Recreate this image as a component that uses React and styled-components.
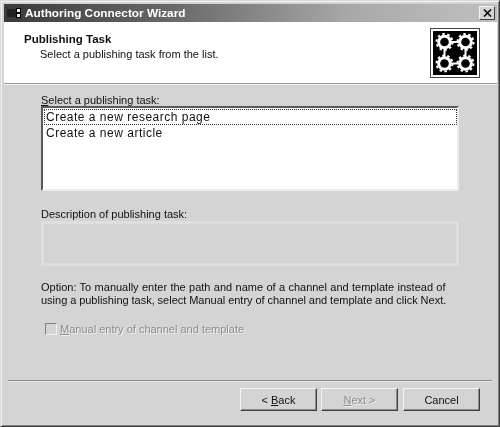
import React from "react";
import styled, { createGlobalStyle } from "styled-components";

const GlobalStyle = createGlobalStyle`
  html, body { margin: 0; padding: 0; background: #d4d4d4; }
  body { font-family: "Liberation Sans", Arial, sans-serif; font-size: 11px; color: #111; }
`;

const Win = styled.div`
  width: 500px;
  height: 427px;
  box-sizing: border-box;
  background: #d4d4d4;
  border-top: 1px solid #d8d8d8;
  border-left: 1px solid #d8d8d8;
  border-right: 1px solid #3a3a3a;
  border-bottom: 1px solid #3a3a3a;
  padding: 3px 2px 2px 3px;
  display: flex;
  flex-direction: column;
  box-shadow: inset 1px 1px 0 #f4f4f4, inset -1px -1px 0 #808080;
  filter: blur(0.4px);
`;

const TitleBar = styled.div`
  height: 18px;
  flex: none;
  display: flex;
  align-items: center;
  padding: 0 2px;
  background: linear-gradient(90deg, #3a3a3a 0%, #6a6a6a 35%, #a8a8a8 70%, #c0c0c0 100%);
`;

const TitleText = styled.span`
  color: #fff;
  font-weight: bold;
  font-size: 11.8px;
  margin-left: 3px;
  flex: 1;
`;

const CloseBtn = styled.div`
  width: 16px;
  height: 14px;
  box-sizing: border-box;
  background: #d4d4d4;
  border: 1px solid;
  border-color: #f4f4f4 #404040 #404040 #f4f4f4;
  display: flex;
  align-items: center;
  justify-content: center;
`;

const Header = styled.div`
  height: 62px;
  flex: none;
  box-sizing: border-box;
  background: #fff;
  border-bottom: 1px solid #9a9a9a;
  box-shadow: 0 1px 0 #f2f2f2;
  display: flex;
  justify-content: space-between;
  padding: 6px 17px 0 20px;
`;

const HeaderText = styled.div`
  padding-top: 2px;
`;

const HeaderTitle = styled.div`
  font-weight: bold;
  font-size: 11.5px;
  line-height: 14px;
  margin-top: 2px;
`;

const HeaderSub = styled.div`
  font-size: 11px;
  line-height: 14px;
  margin-left: 16px;
  margin-top: 1px;
`;

const Logo = styled.div`
  width: 50px;
  height: 50px;
  box-sizing: border-box;
  border: 1px solid #444;
  padding: 2px;
  background: #fff;
  svg { display: block; }
`;

const Body = styled.div`
  flex: 1;
  display: flex;
  flex-direction: column;
  padding: 8px 38px 0 37px;
`;

const Label = styled.div`
  line-height: 13px;
  height: ${(p) => p.$h || 13}px;
  margin-top: ${(p) => p.$top || 0}px;
  u { text-underline-offset: 1px; }
`;

const ListBox = styled.div`
  height: 85px;
  box-sizing: border-box;
  background: #fff;
  border: 2px solid;
  border-color: #5a5a5a #ececec #ececec #5a5a5a;
  padding: 1px 0 0 1px;
`;

const ListItem = styled.div`
  font-size: 12px;
  height: 16px;
  line-height: 14px;
  box-sizing: border-box;
  padding-left: 1px;
  letter-spacing: 0.5px;
  border: 1px ${(p) => (p.$focus ? "dotted #333" : "solid transparent")};
`;

const DescBox = styled.div`
  height: 45px;
  box-sizing: border-box;
  border: 3px solid #dedede;
  background: #d4d4d4;
`;

const Option = styled.div`
  margin-top: 15px;
  font-size: 11px;
  line-height: 13px;
  white-space: nowrap;
`;

const OptionLine = styled.span`
  display: block;
  word-spacing: ${(p) => p.$space || 0}px;
`;

const CheckRow = styled.div`
  display: flex;
  align-items: center;
  margin-top: 16px;
  margin-left: 4px;
  color: #8c8c8c;
  text-shadow: 1px 1px 0 #f0f0f0;
`;

const Box = styled.div`
  width: 12px;
  height: 12px;
  box-sizing: border-box;
  border: 1px solid;
  border-color: #808080 #f0f0f0 #f0f0f0 #808080;
  margin-right: 3px;
`;

const Divider = styled.div`
  flex: none;
  margin: 0 5px 0 4px;
  height: 1px;
  background: #8a8a8a;
  box-shadow: 0 1px 0 #e8e8e8;
`;

const Footer = styled.div`
  flex: none;
  display: flex;
  justify-content: flex-end;
  padding: 7px 17px 13px 0;
`;

const Btn = styled.div`
  width: 77px;
  height: 23px;
  box-sizing: border-box;
  margin-left: ${(p) => p.$gap || 0}px;
  border: 1px solid;
  border-color: #f4f4f4 #404040 #404040 #f4f4f4;
  box-shadow: inset -1px -1px 0 #8c8c8c;
  display: flex;
  align-items: center;
  justify-content: center;
  color: ${(p) => (p.$off ? "#8c8c8c" : "#111")};
  text-shadow: ${(p) => (p.$off ? "1px 1px 0 #f0f0f0" : "none")};
`;

// one gear: white disc with a black hole, teeth drawn as a dashed ring
const Gear = ({ x, y }) => (
  <g>
    <circle cx={x} cy={y} r="8" fill="none" stroke="#fff" strokeWidth="2" strokeDasharray="2.5 2.53" />
    <circle cx={x} cy={y} r="7.3" fill="#fff" />
    <circle cx={x} cy={y} r="4.3" fill="#000" />
  </g>
);

const GearsIcon = () => (
  <svg width="44" height="44" viewBox="0 0 44 44">
    <rect width="44" height="44" fill="#000" />
    <path d="M16 11H28M16 32.5H28M11.5 16V28M32.5 16V28" stroke="#fff" strokeWidth="2" />
    <Gear x={11.5} y={11} />
    <Gear x={32.5} y={11} />
    <Gear x={11.5} y={32.5} />
    <Gear x={32.5} y={32.5} />
  </svg>
);

const AppIcon = () => (
  <svg width="16" height="14" viewBox="0 0 16 14">
    <rect x="1" y="3" width="9" height="8" fill="#222" />
    <rect x="10" y="2" width="5" height="10" fill="#000" />
    <rect x="11" y="3" width="3" height="3" fill="#eee" />
    <rect x="11" y="8" width="3" height="3" fill="#eee" />
  </svg>
);

export default function App() {
  return (
    <>
      <GlobalStyle />
      <Win>
        <TitleBar>
          <AppIcon />
          <TitleText>Authoring Connector Wizard</TitleText>
          <CloseBtn>
            <svg width="9" height="8" viewBox="0 0 9 8">
              <path d="M1 0.5L8 7.5M8 0.5L1 7.5" stroke="#111" strokeWidth="1.7" />
            </svg>
          </CloseBtn>
        </TitleBar>
        <Header>
          <HeaderText>
            <HeaderTitle>Publishing Task</HeaderTitle>
            <HeaderSub>Select a publishing task from the list.</HeaderSub>
          </HeaderText>
          <Logo>
            <GearsIcon />
          </Logo>
        </Header>
        <Body>
          <Label $top={2} $h={12}>
            <u>S</u>elect a publishing task:
          </Label>
          <ListBox>
            <ListItem $focus>Create a new research page</ListItem>
            <ListItem>Create a new article</ListItem>
          </ListBox>
          <Label $top={17}>Description of publishing task:</Label>
          <DescBox />
          <Option>
            <OptionLine $space={0.3}>
              Option: To manually enter the path and name of a channel and template instead of
            </OptionLine>
            <OptionLine $space={-0.2}>
              using a publishing task, select Manual entry of channel and template and click Next.
            </OptionLine>
          </Option>
          <CheckRow>
            <Box />
            <span>
              <u>M</u>anual entry of channel and template
            </span>
          </CheckRow>
        </Body>
        <Divider />
        <Footer>
          <Btn>
            <span>
              &lt; <u>B</u>ack
            </span>
          </Btn>
          <Btn $off $gap={4}>
            <span>
              <u>N</u>ext &gt;
            </span>
          </Btn>
          <Btn $gap={5}>Cancel</Btn>
        </Footer>
      </Win>
    </>
  );
}
